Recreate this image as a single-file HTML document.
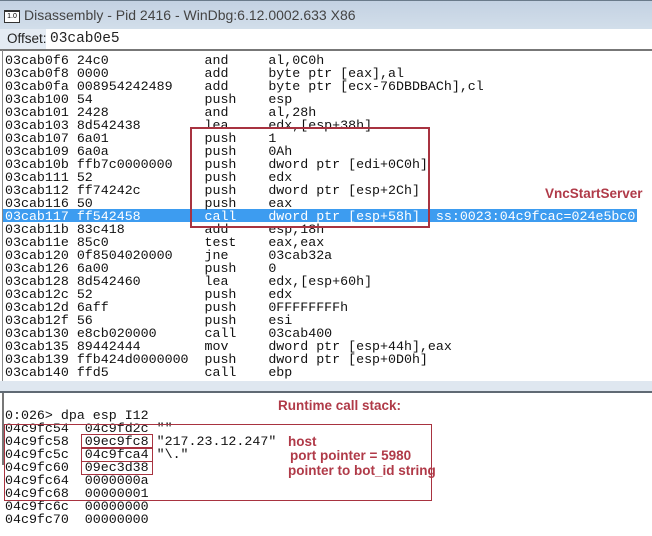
<!DOCTYPE html>
<html><head><style>
body{margin:0;width:652px;height:536px;overflow:hidden;background:#fff;position:relative;font-family:"Liberation Mono",monospace}
.t{position:absolute;left:0;top:0;width:652px;height:29px;background:linear-gradient(#c3d1e2,#d2deea);border-top:1px solid #6a7a8a;box-sizing:border-box}
.t span{position:absolute;left:24px;top:6px;font:14px "Liberation Sans",sans-serif;color:#444}
.ico{position:absolute;left:4px;top:9px;width:14px;height:10px;border:1px solid #333;background:#fff;font:7px "Liberation Sans";line-height:10px;text-align:center;border-top-width:2px}
.o{position:absolute;left:0;top:29px;width:652px;height:20px;background:#fff;border-bottom:2px solid #777}
.o .l{position:absolute;left:0;top:0;width:46px;height:20px;background:#e4ebf3;font:13.5px "Liberation Sans",sans-serif;line-height:20px;padding-left:7px;box-sizing:border-box;color:#222}
.o .v{position:absolute;left:50px;top:0;font-size:14.5px;line-height:20px;color:#222}
pre{position:absolute;margin:0;font-family:"Liberation Mono",monospace;font-size:13.3px;line-height:13px;color:#111}
.hl{position:absolute;left:3px;top:209px;width:634px;height:13px;background:#3d9cf0}
.band{position:absolute;left:0;top:381px;width:652px;height:10px;background:#dfe7f0;border-bottom:2px solid #606a74}
.lb{position:absolute;left:2px;top:50px;width:1px;height:331px;background:#888}
.lb2{position:absolute;left:2px;top:393px;width:2px;height:72px;background:#777}
.box{position:absolute;border:2px solid #a83340}
.sb{position:absolute;border:1.5px solid #a83340}
.lab{position:absolute;font:bold 13.5px "Liberation Sans",sans-serif;color:#b03a48}
</style></head><body>
<div class="t"><div class="ico">1.0</div><span>Disassembly - Pid 2416 - WinDbg:6.12.0002.633 X86</span></div>
<div class="o"><div class="l">Offset:</div><div class="v">03cab0e5</div></div>
<div class="lb"></div>
<div class="hl"></div>
<pre style="left:5px;top:54px">03cab0f6 24c0            and     al,0C0h
03cab0f8 0000            add     byte ptr [eax],al
03cab0fa 008954242489    add     byte ptr [ecx-76DBDBACh],cl
03cab100 54              push    esp
03cab101 2428            and     al,28h
03cab103 8d542438        lea     edx,[esp+38h]
03cab107 6a01            push    1
03cab109 6a0a            push    0Ah
03cab10b ffb7c0000000    push    dword ptr [edi+0C0h]
03cab111 52              push    edx
03cab112 ff74242c        push    dword ptr [esp+2Ch]
03cab116 50              push    eax
<span style="color:#fff">03cab117 ff542458        call    dword ptr [esp+58h]  ss:0023:04c9fcac=024e5bc0</span>
03cab11b 83c418          add     esp,18h
03cab11e 85c0            test    eax,eax
03cab120 0f8504020000    jne     03cab32a
03cab126 6a00            push    0
03cab128 8d542460        lea     edx,[esp+60h]
03cab12c 52              push    edx
03cab12d 6aff            push    0FFFFFFFFh
03cab12f 56              push    esi
03cab130 e8cb020000      call    03cab400
03cab135 89442444        mov     dword ptr [esp+44h],eax
03cab139 ffb424d0000000  push    dword ptr [esp+0D0h]
03cab140 ffd5            call    ebp</pre>
<div class="box" style="left:190px;top:127px;width:236px;height:97px"></div>
<div class="lab" style="left:545px;top:186px">VncStartServer</div>
<div class="band"></div>
<div class="lb2"></div>
<div class="lab" style="left:278px;top:398px">Runtime call stack:</div>
<pre style="left:5px;top:409px">0:026> dpa esp I12
04c9fc54  04c9fd2c ""
04c9fc58  09ec9fc8 "217.23.12.247"
04c9fc5c  04c9fca4 "\."
04c9fc60  09ec3d38
04c9fc64  0000000a
04c9fc68  00000001
04c9fc6c  00000000
04c9fc70  00000000</pre>
<div class="box" style="left:4px;top:424px;width:426px;height:75px;border-width:1.5px"></div>
<div class="sb" style="left:81px;top:434px;width:70px;height:12px"></div>
<div class="sb" style="left:81px;top:448px;width:70px;height:12px"></div>
<div class="sb" style="left:81px;top:461px;width:70px;height:12px"></div>
<div class="lab" style="left:288px;top:434px">host</div>
<div class="lab" style="left:290px;top:448px">port pointer = 5980</div>
<div class="lab" style="left:288px;top:463px">pointer to bot_id string</div>
</body></html>
